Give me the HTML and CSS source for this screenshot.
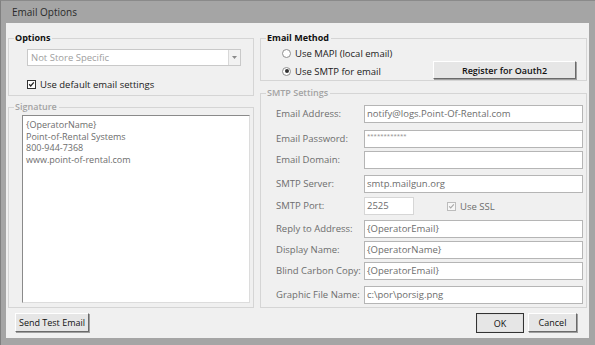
FILE: index.html
```html
<!DOCTYPE html>
<html lang="en">
<head>
    <meta charset="UTF-8">
    <title>Email Options</title>
    <link rel="stylesheet" href="styles.css">
</head>
<body>
<div class="window">
    <div class="titlebar">Email Options</div>
    <div class="client">
        <div class="panes">
            <div class="col-left">
                <fieldset class="group group-options">
                    <legend>Options</legend>
                    <div class="combo">
                        <span class="combo-text">Not Store Specific</span>
                        <span class="combo-btn">
                            <svg width="5" height="3" viewBox="0 0 5 3"><path d="M0 0h5L2.5 3z" fill="#8a8a8a"/></svg>
                        </span>
                    </div>
                    <label class="check">
                        <span class="box">
                            <svg width="9" height="9" viewBox="0 0 9 9"><path d="M1.5 4.2l2 2.2 4-4.6" fill="none" stroke="#222" stroke-width="1.6"/></svg>
                        </span>
                        Use default email settings
                    </label>
                </fieldset>
                <fieldset class="group group-signature off">
                    <legend>Signature</legend>
                    <div class="memo">
                        {OperatorName}<br>
                        Point-of-Rental Systems<br>
                        800-944-7368<br>
                        www.point-of-rental.com
                    </div>
                </fieldset>
            </div>
            <div class="col-right">
                <fieldset class="group group-method">
                    <legend>Email Method</legend>
                    <div class="method-body">
                        <div class="radios">
                            <label class="radio"><span class="dot"></span>Use MAPI (local email)</label>
                            <label class="radio"><span class="dot on"></span>Use SMTP for email</label>
                        </div>
                        <button class="btn btn-3d btn-oauth">Register for Oauth2</button>
                    </div>
                </fieldset>
                <fieldset class="group group-smtp off">
                    <legend>SMTP Settings</legend>
                    <div class="form">
                        <span class="lbl">Email Address:</span>
                        <span class="field">notify@logs.Point-Of-Rental.com</span>

                        <span class="lbl">Email Password:</span>
                        <span class="field field-pass">************</span>

                        <span class="lbl">Email Domain:</span>
                        <span class="field"></span>

                        <span class="lbl">SMTP Server:</span>
                        <span class="field">smtp.mailgun.org</span>

                        <span class="lbl">SMTP Port:</span>
                        <span class="port-row">
                            <span class="field field-port">2525</span>
                            <label class="check check-off">
                                <span class="box">
                                    <svg width="9" height="9" viewBox="0 0 9 9"><path d="M1.5 4.2l2 2.2 4-4.6" fill="none" stroke="#a8a8a8" stroke-width="1.4"/></svg>
                                </span>
                                Use SSL
                            </label>
                        </span>

                        <span class="lbl">Reply to Address:</span>
                        <span class="field">{OperatorEmail}</span>

                        <span class="lbl">Display Name:</span>
                        <span class="field">{OperatorName}</span>

                        <span class="lbl">Blind Carbon Copy:</span>
                        <span class="field">{OperatorEmail}</span>

                        <span class="lbl">Graphic File Name:</span>
                        <span class="field">c:\por\porsig.png</span>
                    </div>
                </fieldset>
            </div>
        </div>
        <div class="footer">
            <button class="btn btn-3d btn-test">Send Test Email</button>
            <div class="actions">
                <button class="btn btn-default btn-ok">OK</button>
                <button class="btn btn-3d btn-cancel">Cancel</button>
            </div>
        </div>
    </div>
</div>
</body>
</html>
```

FILE: styles.css
```css
*{
    margin: 0;
    padding: 0;
    box-sizing: border-box;
}
body{
    width: 595px;
    height: 345px;
    overflow: hidden;
    background: #a5a5a5;
    font-family: "Open Sans", "Noto Sans", sans-serif;
    font-size: 9px;
    color: #1a1a1a;
}
.window{
    width: 595px;
    height: 345px;
    background: #a5a5a5;
    border-left: 1px solid #808080;
    border-top: 1px solid #8a8a8a;
    display: flex;
    flex-direction: column;
}
.titlebar{
    height: 22px;
    line-height: 22px;
    padding-left: 11px;
    font-size: 10px;
    color: #2a2a2a;
}
.client{
    width: 583px;
    height: 315px;
    margin-left: 5px;
    background: #f0f0f0;
    padding: 9px 2px 0 2px;
    display: flex;
    flex-direction: column;
}
.panes{
    display: flex;
    gap: 6px;
}
.col-left{
    width: 246px;
    display: flex;
    flex-direction: column;
}
.col-right{
    width: 327px;
    display: flex;
    flex-direction: column;
}

/* group boxes */
.group{
    border: 1px solid #d5d5d5;
    padding: 0;
    min-width: 0;
}
.group legend{
    margin-left: 5px;
    padding: 0 2px 0 1px;
    height: 12px;
    line-height: 12px;
    font-weight: bold;
    color: #111;
}
.group.off legend{
    font-weight: 600;
    color: #a3a3a3;
}
.group-options{
    height: 64px;
}
.group-signature{
    height: 207px;
    margin-top: 5px;
}
.group-method{
    height: 49px;
}
.group-smtp{
    height: 221px;
    margin-top: 6px;
}

/* combo */
.combo{
    width: 214px;
    height: 17px;
    margin: 5px 0 0 18px;
    border: 1px solid #c9c9c9;
    background: #fff;
    display: flex;
    align-items: center;
}
.combo-text{
    flex: 1;
    padding-left: 3px;
    color: #a0a0a0;
    font-size: 9.5px;
}
.combo-btn{
    width: 12px;
    height: 15px;
    border-left: 1px solid #d8d8d8;
    background: #f2f2f2;
    display: flex;
    align-items: center;
    justify-content: center;
}

/* check boxes and radios */
.check{
    display: flex;
    align-items: center;
    gap: 4px;
}
.group-options .check{
    margin: 12px 0 0 18px;
    font-size: 9.5px;
}
.box{
    width: 9px;
    height: 9px;
    border: 1px solid #333;
    background: #fff;
    display: flex;
    align-items: center;
    justify-content: center;
}
.box svg{
    display: block;
}
.check-off{
    color: #6d6d6d;
    font-size: 9.5px;
}
.check-off .box{
    border-color: #bcbcbc;
    background: #f7f7f7;
}
.method-body{
    display: flex;
    justify-content: space-between;
    align-items: flex-end;
    padding: 0 10px 1px 21px;
}
.radio{
    height: 18px;
    display: flex;
    align-items: center;
    gap: 4px;
    font-size: 9.5px;
}
.dot{
    width: 9px;
    height: 9px;
    border: 1px solid #8f8f8f;
    border-radius: 50%;
    background: #fff;
    display: flex;
    align-items: center;
    justify-content: center;
}
.dot.on::after{
    content: "";
    width: 4px;
    height: 4px;
    border-radius: 50%;
    background: #333;
}

/* buttons */
.btn{
    font-family: inherit;
    font-size: 9px;
    color: #111;
    background: #e6e6e6;
    cursor: pointer;
}
.btn-3d{
    border: 1px solid;
    border-color: #fff #6a6a6a #6a6a6a #fff;
    box-shadow: 1px 1px 0 #a0a0a0;
}
.btn-default{
    border: 1px solid #333;
    box-shadow: inset 0 0 0 1px #dedede;
}
.btn-oauth{
    width: 143px;
    height: 18px;
    font-weight: 600;
    margin-bottom: 1px;
}

/* smtp form */
.form{
    display: grid;
    grid-template-columns: 88px 219px;
    grid-template-rows: 25px 21px 24px 22px 23px 21px 21px 24px 18px;
    padding: 6px 0 0 15px;
}
.lbl{
    height: 18px;
    line-height: 18px;
    color: #6d6d6d;
    font-size: 9.5px;
}
.field{
    height: 18px;
    line-height: 16px;
    border: 1px solid #b5b5b5;
    background: #fff;
    padding-left: 2px;
    color: #6d6d6d;
    font-size: 9.5px;
    white-space: nowrap;
}
.field-pass{
    font-size: 6px;
    line-height: 11px;
    color: #8a8a8a;
}
.port-row{
    display: flex;
    align-items: center;
    height: 18px;
}
.field-port{
    width: 50px;
    border-color: #d6d6d6;
}
.port-row .check{
    margin-left: 33px;
}

/* signature */
.memo{
    width: 228px;
    height: 188px;
    margin: 2px 0 0 13px;
    border: 1px solid #8a8a8a;
    border-right-color: #dcdcdc;
    border-bottom-color: #dcdcdc;
    background: #fff;
    padding: 3px 0 0 3px;
    line-height: 11.6px;
    color: #6d6d6d;
}

/* footer */
.footer{
    display: flex;
    justify-content: space-between;
    align-items: flex-start;
    margin-top: 5px;
    padding: 0 10px 0 7px;
}
.btn-test{
    width: 74px;
    height: 19px;
}
.actions{
    display: flex;
    gap: 4px;
}
.btn-ok{
    width: 48px;
    height: 20px;
}
.btn-cancel{
    width: 49px;
    height: 19px;
}
```
